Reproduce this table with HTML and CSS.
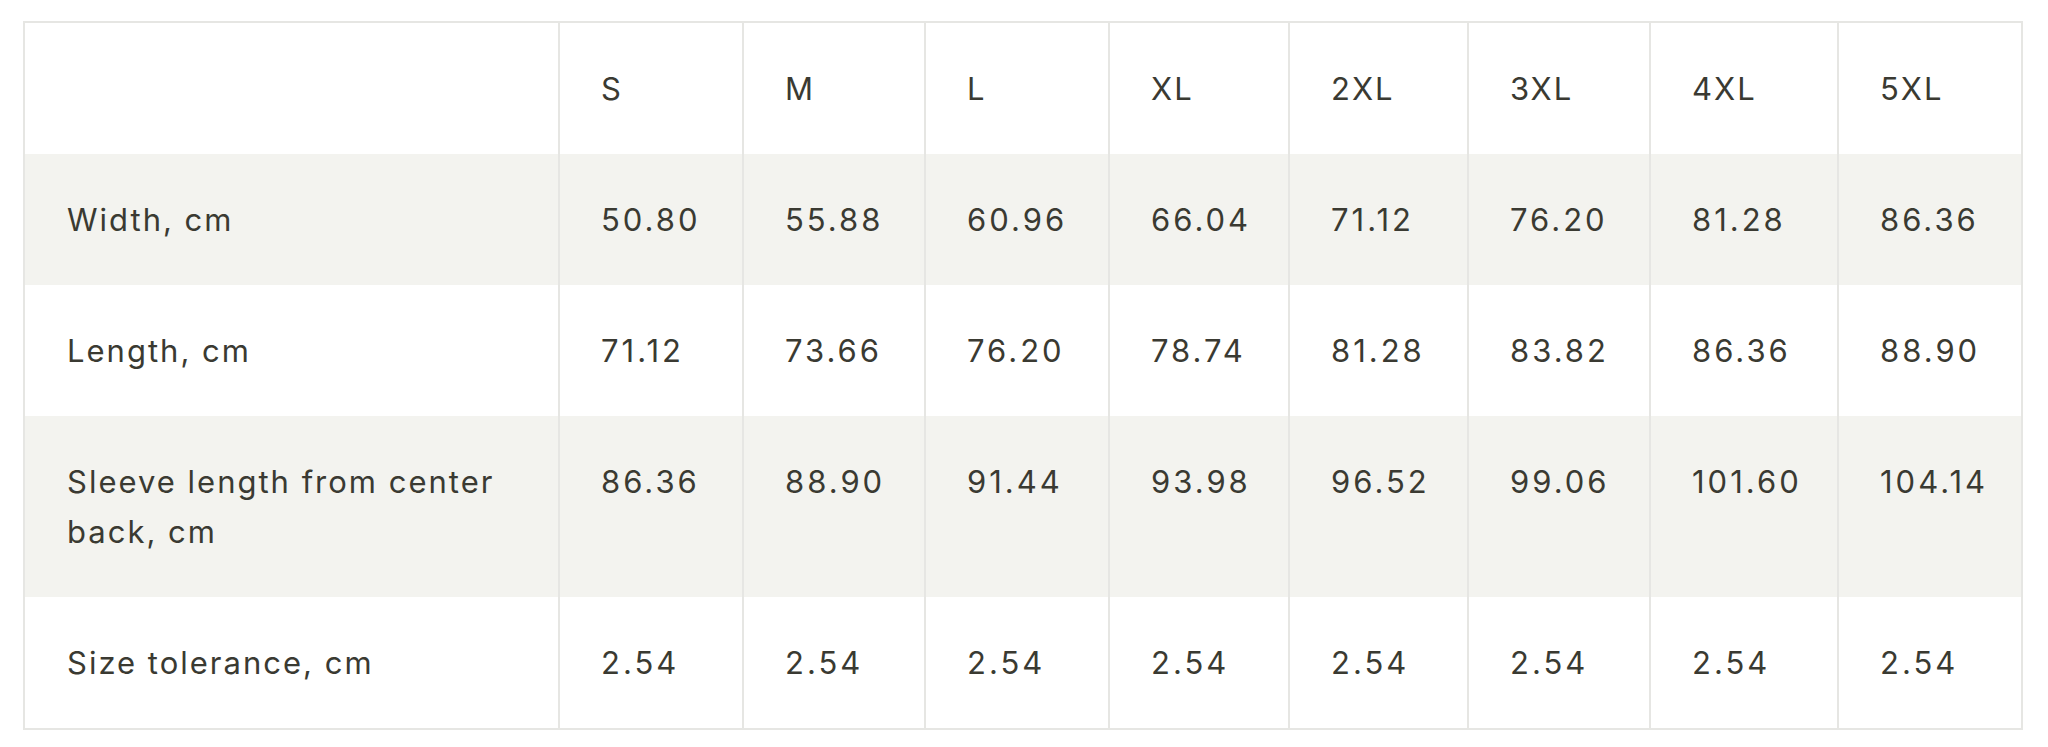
FILE: index.html
```html
<!DOCTYPE html>
<html lang="en">
<head>
<meta charset="utf-8">
<title>Size chart</title>
<link rel="stylesheet" href="styles.css">
</head>
<body>
<div class="page">
  <table class="size-table">
    <colgroup>
      <col class="c-label">
      <col class="c-s">
      <col class="c-m">
      <col class="c-l">
      <col class="c-xl">
      <col class="c-2xl">
      <col class="c-3xl">
      <col class="c-4xl">
      <col class="c-5xl">
    </colgroup>
    <thead>
      <tr>
        <th class="label"></th>
        <th>S</th><th>M</th><th>L</th><th>XL</th><th>2XL</th><th>3XL</th><th>4XL</th><th>5XL</th>
      </tr>
    </thead>
    <tbody>
      <tr class="alt">
        <td class="label">Width, cm</td>
        <td>50.80</td><td>55.88</td><td>60.96</td><td>66.04</td><td>71.12</td><td>76.20</td><td>81.28</td><td>86.36</td>
      </tr>
      <tr>
        <td class="label">Length, cm</td>
        <td>71.12</td><td>73.66</td><td>76.20</td><td>78.74</td><td>81.28</td><td>83.82</td><td>86.36</td><td>88.90</td>
      </tr>
      <tr class="alt">
        <td class="label">Sleeve length from center back, cm</td>
        <td>86.36</td><td>88.90</td><td>91.44</td><td>93.98</td><td>96.52</td><td>99.06</td><td>101.60</td><td>104.14</td>
      </tr>
      <tr>
        <td class="label">Size tolerance, cm</td>
        <td>2.54</td><td>2.54</td><td>2.54</td><td>2.54</td><td>2.54</td><td>2.54</td><td>2.54</td><td>2.54</td>
      </tr>
    </tbody>
  </table>
</div>
</body>
</html>
```

FILE: styles.css
```css
html, body {
  margin: 0;
  padding: 0;
  background: #ffffff;
}

.page {
  padding: 21px 0 0 23px;
}

.size-table {
  width: 2000px;
  table-layout: fixed;
  border-collapse: separate;
  border-spacing: 0;
  border: 2px solid #e6e6e3;
  font-family: "Inter", "Liberation Sans", sans-serif;
  font-size: 31px;
  line-height: 50px;
  letter-spacing: 2px;
  color: #3a3a32;
}

.c-label { width: 533px; }
.c-s { width: 184px; }
.c-m { width: 182px; }
.c-l { width: 184px; }
.c-xl { width: 180px; }
.c-2xl { width: 179px; }
.c-3xl { width: 182px; }
.c-4xl { width: 188px; }
.c-5xl { width: 184px; }

.size-table th,
.size-table td {
  padding: 41px 42px 40px 42px;
  text-align: left;
  vertical-align: top;
  font-weight: 400;
}

.size-table th + th,
.size-table td + td {
  border-left: 2px solid #e6e6e3;
  padding-left: 41px;
  letter-spacing: 3px;
}

.size-table th + th {
  letter-spacing: 2px;
}

.size-table tr.alt td {
  background: #f3f3ef;
}
```
